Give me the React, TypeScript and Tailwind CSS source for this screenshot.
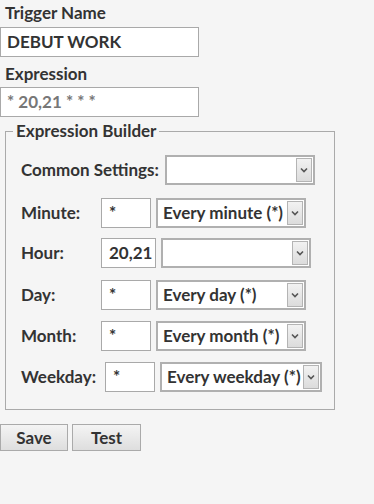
import React from 'react';

const font = { fontFamily: 'Lato, "Open Sans", sans-serif' };

const Arrow = () => (
  <div className="ml-auto my-[1px] mr-[1px] w-[16px] shrink-0 self-stretch flex items-center justify-center border border-[#b4b4b4] bg-gradient-to-b from-[#f2f2f2] to-[#dcdcdc]">
    <svg width="8" height="6" viewBox="0 0 8 6">
      <path d="M1 1.5 L4 4.5 L7 1.5" stroke="#555" strokeWidth="1.6" fill="none" />
    </svg>
  </div>
);

const Select = ({ value, w }: { value: string; w: string }) => (
  <div className={`${w} h-[30px] flex items-center bg-white border-2 border-[#b0b0b0] pl-[5px] text-[#333] font-bold text-[17px]`}>
    <span className="whitespace-nowrap">{value}</span>
    <Arrow />
  </div>
);

const Field = ({ value, w }: { value: string; w: string }) => (
  <div className={`${w} h-[30px] flex items-center bg-white border border-[#a9a9a9] px-[7px] text-[#333] font-bold text-[17px]`}>
    {value}
  </div>
);

const rows = [
  { label: 'Minute:', lw: 'w-[80px]', v: '*', iw: 'w-[50px]', s: 'Every minute (*)', sw: 'w-[150px]', mt: 'mt-[13px]' },
  { label: 'Hour:', lw: 'w-[80px]', v: '20,21', iw: 'w-[55px]', s: '', sw: 'w-[150px]', mt: 'mt-[10px]' },
  { label: 'Day:', lw: 'w-[80px]', v: '*', iw: 'w-[50px]', s: 'Every day (*)', sw: 'w-[150px]', mt: 'mt-[12px]' },
  { label: 'Month:', lw: 'w-[80px]', v: '*', iw: 'w-[50px]', s: 'Every month (*)', sw: 'w-[150px]', mt: 'mt-[11px]' },
  { label: 'Weekday:', lw: 'w-[84px]', v: '*', iw: 'w-[50px]', s: 'Every weekday (*)', sw: 'w-[162px]', mt: 'mt-[11px]' },
];

export default function App() {
  return (
    <div className="w-[374px] h-[504px] bg-[#f5f5f5] text-[#333]" style={font}>
      <div className="pt-[2px]">
        <div className="pl-[5px] font-bold text-[17px] leading-[22px]">Trigger Name</div>
        <div className="mt-[3px] w-[199px] h-[30px] flex items-center bg-white border border-[#a9a9a9] pl-[6px] font-bold text-[17px]">
          DEBUT WORK
        </div>
        <div className="mt-[6px] pl-[5px] font-bold text-[17px] leading-[22px]">Expression</div>
        <div className="mt-[2px] w-[199px] h-[30px] flex items-center bg-white border border-[#a9a9a9] pl-[6px] font-bold text-[17px] text-[#777]">
          * 20,21 * * *
        </div>
      </div>

      <fieldset className="ml-[5px] mt-[4px] w-[330px] border border-[#aaa] pb-[17px]">
        <legend className="ml-[7px] px-[3px] font-bold text-[17px] leading-[20px]">Expression Builder</legend>
        <div className="pl-[15px] pt-[14px] flex flex-col">
          <div className="flex items-center">
            <span className="w-[144px] font-bold text-[17px] whitespace-nowrap">Common Settings:</span>
            <Select value="" w="w-[150px]" />
          </div>
          {rows.map((r) => (
            <div key={r.label} className={`flex items-center ${r.mt}`}>
              <span className={`${r.lw} font-bold text-[17px]`}>{r.label}</span>
              <div className="flex items-center gap-[5px]">
                <Field value={r.v} w={r.iw} />
                <Select value={r.s} w={r.sw} />
              </div>
            </div>
          ))}
        </div>
      </fieldset>

      <div className="mt-[14px] flex gap-[4px]">
        <button className="w-[68px] h-[27px] border border-[#aaa] bg-gradient-to-b from-[#f4f4f4] to-[#dedede] font-bold text-[17px] text-[#333]">
          Save
        </button>
        <button className="w-[69px] h-[27px] border border-[#aaa] bg-gradient-to-b from-[#f4f4f4] to-[#dedede] font-bold text-[17px] text-[#333]">
          Test
        </button>
      </div>
    </div>
  );
}
